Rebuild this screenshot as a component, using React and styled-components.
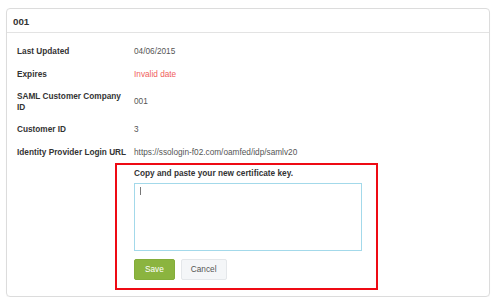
import React from "react";
import styled, { createGlobalStyle } from "styled-components";

const Global = createGlobalStyle`
  html, body { margin: 0; padding: 0; background: #fff; }
  body { font-family: "Liberation Sans", Arial, sans-serif; }
`;

const Panel = styled.section`
  margin: 8px 0 0 6px;
  width: 484px;
  height: 289px;
  box-sizing: border-box;
  border: 1px solid #dcdcdc;
  border-radius: 4px;
  box-shadow: 0 1px 1px rgba(0,0,0,0.04);
  display: flex;
  flex-direction: column;
`;

const Header = styled.header`
  height: 24px;
  box-sizing: border-box;
  padding: 2px 6px 0;
  display: flex;
  align-items: center;
  border-bottom: 1px solid #e3e3e3;
  font-size: 9.75px;
  font-weight: 700;
  color: #333;
`;

const Body = styled.div`
  padding: 7.5px 0 0 10px;
  display: flex;
  flex-direction: column;
`;

const Row = styled.div`
  display: grid;
  grid-template-columns: 117px 1fr;
  align-items: center;
  padding: 5.7px 0;
  font-size: 8.25px;
  line-height: 11px;
`;

const Label = styled.div`
  font-weight: 700;
  color: #333;
  white-space: ${(p) => (p.$wrap ? "normal" : "nowrap")};
  padding-right: ${(p) => (p.$wrap ? "8px" : "0")};
`;

const Value = styled.div`
  color: ${(p) => (p.$error ? "#f0605c" : "#555")};
`;

const Highlight = styled.div`
  margin-left: 98px;
  width: 263px;
  height: 127px;
  box-sizing: border-box;
  border: 2px solid #ee0a14;
  padding: 3px 14px 8px 17px;
  display: flex;
  flex-direction: column;
`;

const Prompt = styled.div`
  font-size: 8.25px;
  line-height: 11px;
  font-weight: 700;
  color: #333;
  margin-bottom: 4px;
`;

const AreaWrap = styled.div`
  position: relative;
  width: 228px;
  height: 68px;
`;

const Area = styled.textarea`
  width: 100%;
  height: 100%;
  box-sizing: border-box;
  border: 1px solid #a3d9ea;
  border-radius: 0;
  outline: none;
  resize: none;
  padding: 4px 6px;
  font-family: "Liberation Sans", Arial, sans-serif;
  font-size: 8.25px;
  background: #fff;
`;

const Caret = styled.span`
  position: absolute;
  left: 6px;
  top: 4px;
  width: 1px;
  height: 8px;
  background: #777;
`;

const Actions = styled.div`
  display: flex;
  gap: 6px;
  margin-top: 8px;
`;

const Button = styled.button`
  height: 21px;
  box-sizing: border-box;
  padding: 0 ${(p) => (p.$primary ? "10px" : "9px")};
  font-family: "Liberation Sans", Arial, sans-serif;
  font-size: 8.25px;
  border-radius: 2px;
  cursor: pointer;
  border: 1px solid ${(p) => (p.$primary ? "#84ad3a" : "#e4e7ea")};
  background: ${(p) => (p.$primary ? "#8bb43f" : "#f4f6f8")};
  color: ${(p) => (p.$primary ? "#fff" : "#555")};
`;

const rows = [
  ["Last Updated", "04/06/2015"],
  ["Expires", "Invalid date", true],
  ["SAML Customer Company ID", "001", false, true],
  ["Customer ID", "3"],
  ["Identity Provider Login URL", "https://ssologin-f02.com/oamfed/idp/samlv20"],
];

export default function App() {
  return (
    <>
      <Global />
      <Panel>
        <Header>001</Header>
        <Body>
          {rows.map(([l, v, err, wrap]) => (
            <Row key={l}>
              <Label $wrap={wrap}>{l}</Label>
              <Value $error={err}>{v}</Value>
            </Row>
          ))}
          <Highlight>
            <Prompt>Copy and paste your new certificate key.</Prompt>
            <AreaWrap>
              <Area readOnly />
              <Caret />
            </AreaWrap>
            <Actions>
              <Button $primary>Save</Button>
              <Button>Cancel</Button>
            </Actions>
          </Highlight>
        </Body>
      </Panel>
    </>
  );
}
